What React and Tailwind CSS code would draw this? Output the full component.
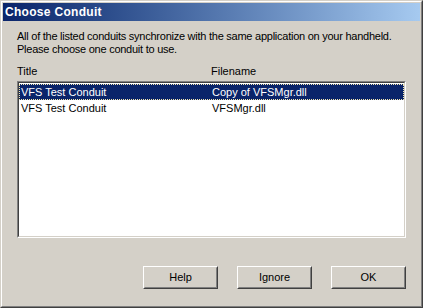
import React from 'react';

const rows = [
  { title: 'VFS Test Conduit', file: 'Copy of VFSMgr.dll', selected: true },
  { title: 'VFS Test Conduit', file: 'VFSMgr.dll', selected: false },
];

function Button({ children }) {
  return (
    <div className="border border-t-white border-l-white border-b-[#404040] border-r-[#404040]">
      <div className="w-[73px] h-[21px] flex items-center justify-center border border-t-[#d4d0c8] border-l-[#d4d0c8] border-b-[#808080] border-r-[#808080] text-black">
        {children}
      </div>
    </div>
  );
}

export default function App() {
  return (
    <div
      className="w-[423px] h-[308px] bg-[#d4d0c8] border border-t-[#d4d0c8] border-l-[#d4d0c8] border-b-[#404040] border-r-[#404040] text-[11px] leading-[13px] text-black"
      style={{ fontFamily: '"Liberation Sans", Arial, sans-serif' }}
    >
      <div className="h-full flex flex-col border border-t-white border-l-white border-b-[#808080] border-r-[#808080] p-px">
        {/* title bar */}
        <div className="h-[18px] shrink-0 flex items-center pl-[2px] bg-gradient-to-r from-[#0a246a] to-[#a6caf0]">
          <span className="text-white font-bold text-[12px] tracking-[0.3px]">Choose Conduit</span>
        </div>

        <div className="flex-1 flex flex-col pl-[14px] pr-[14px]">
          <p className="mt-[9px] whitespace-nowrap tracking-[-0.25px]">
            All of the listed conduits synchronize with the same application on your handheld.
            <br />
            Please choose one conduit to use.
          </p>

          <div className="flex mt-[9px]">
            <span className="w-[194px]">Title</span>
            <span>Filename</span>
          </div>

          {/* list box */}
          <div className="mt-[3px] h-[157px] border border-t-[#808080] border-l-[#808080] border-b-white border-r-white">
            <div className="h-full bg-white border border-t-[#404040] border-l-[#404040] border-b-[#d4d0c8] border-r-[#d4d0c8] pt-px">
              {rows.map((r, i) => (
                <div
                  key={i}
                  className={`h-[16px] flex items-center pl-[1px] ${
                    r.selected ? 'bg-[#0a246a] text-white outline-1 outline-dotted outline-[#f4e8b0] -outline-offset-1' : ''
                  }`}
                >
                  <span className="w-[192px] pl-px">{r.title}</span>
                  <span>{r.file}</span>
                </div>
              ))}
            </div>
          </div>

          <div className="flex justify-end gap-[19px] mt-[28px]">
            <Button>Help</Button>
            <Button>Ignore</Button>
            <Button>OK</Button>
          </div>
        </div>
      </div>
    </div>
  );
}
